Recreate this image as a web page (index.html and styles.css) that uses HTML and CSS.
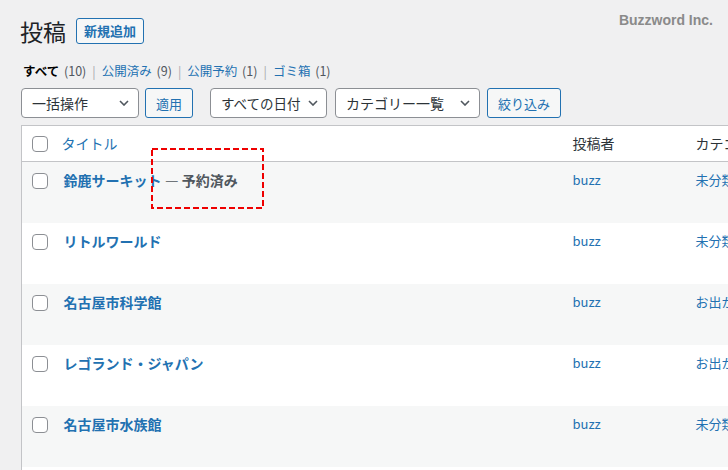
FILE: index.html
```html
<!DOCTYPE html>
<html lang="ja">
<head>
    <meta charset="UTF-8">
    <meta name="viewport" content="width=device-width, initial-scale=1.0">
    <title>投稿一覧</title>
    <link rel="stylesheet" href="styles.css">
</head>
<body>
    <div class="brand">Buzzword Inc.</div>
    <div class="wrap">
        <div class="page-head">
            <h1>投稿</h1>
            <a class="add-new" href="#">新規追加</a>
        </div>

        <ul class="subsubsub">
            <li><a class="current" href="#">すべて <span class="count">(10)</span></a><span class="sep">|</span></li>
            <li><a href="#">公開済み <span class="count">(9)</span></a><span class="sep">|</span></li>
            <li><a href="#">公開予約 <span class="count">(1)</span></a><span class="sep">|</span></li>
            <li><a href="#">ゴミ箱 <span class="count">(1)</span></a></li>
        </ul>

        <div class="tablenav">
            <div class="select bulk">
                <span>一括操作</span>
                <svg width="10" height="6" viewBox="0 0 10 6"><path d="M1 1l4 4 4-4" fill="none" stroke="#50575e" stroke-width="1.6"/></svg>
            </div>
            <button class="btn apply">適用</button>
            <div class="select dates">
                <span>すべての日付</span>
                <svg width="10" height="6" viewBox="0 0 10 6"><path d="M1 1l4 4 4-4" fill="none" stroke="#50575e" stroke-width="1.6"/></svg>
            </div>
            <div class="select cats">
                <span>カテゴリー一覧</span>
                <svg width="10" height="6" viewBox="0 0 10 6"><path d="M1 1l4 4 4-4" fill="none" stroke="#50575e" stroke-width="1.6"/></svg>
            </div>
            <button class="btn filter">絞り込み</button>
        </div>

        <div class="table-holder">
            <table class="posts">
                <colgroup>
                    <col class="c-cb">
                    <col class="c-title">
                    <col class="c-author">
                    <col class="c-cat">
                    <col class="c-tag">
                    <col class="c-date">
                </colgroup>
                <thead>
                    <tr>
                        <th class="check"><input type="checkbox"></th>
                        <th><a href="#">タイトル</a></th>
                        <th>投稿者</th>
                        <th>カテゴリー</th>
                        <th>タグ</th>
                        <th>日付</th>
                    </tr>
                </thead>
                <tbody>
                    <tr>
                        <td class="check"><input type="checkbox"></td>
                        <td class="title"><a href="#">鈴鹿サーキット</a> <span class="state">— 予約済み</span></td>
                        <td><a href="#">buzz</a></td>
                        <td><a href="#">未分類</a></td>
                        <td>—</td>
                        <td>予約済み</td>
                    </tr>
                    <tr>
                        <td class="check"><input type="checkbox"></td>
                        <td class="title"><a href="#">リトルワールド</a></td>
                        <td><a href="#">buzz</a></td>
                        <td><a href="#">未分類</a></td>
                        <td>—</td>
                        <td>公開済み</td>
                    </tr>
                    <tr>
                        <td class="check"><input type="checkbox"></td>
                        <td class="title"><a href="#">名古屋市科学館</a></td>
                        <td><a href="#">buzz</a></td>
                        <td><a href="#">お出かけ</a></td>
                        <td>—</td>
                        <td>公開済み</td>
                    </tr>
                    <tr>
                        <td class="check"><input type="checkbox"></td>
                        <td class="title"><a href="#">レゴランド・ジャパン</a></td>
                        <td><a href="#">buzz</a></td>
                        <td><a href="#">お出かけ</a></td>
                        <td>—</td>
                        <td>公開済み</td>
                    </tr>
                    <tr>
                        <td class="check"><input type="checkbox"></td>
                        <td class="title"><a href="#">名古屋市水族館</a></td>
                        <td><a href="#">buzz</a></td>
                        <td><a href="#">未分類</a></td>
                        <td>—</td>
                        <td>公開済み</td>
                    </tr>
                    <tr>
                        <td class="check"><input type="checkbox"></td>
                        <td class="title"><a href="#">東山動植物園</a></td>
                        <td><a href="#">buzz</a></td>
                        <td><a href="#">未分類</a></td>
                        <td>—</td>
                        <td>公開済み</td>
                    </tr>
                </tbody>
            </table>
            <svg class="mark" width="113" height="61" viewBox="0 0 113 61">
                <rect x="1" y="1" width="111" height="59" fill="none" stroke="#ee0000" stroke-width="2" stroke-dasharray="6 3"/>
            </svg>
        </div>
    </div>
</body>
</html>
```

FILE: styles.css
```css
html, body {
    overflow: hidden;
}

body {
    margin: 0;
    background-color: #f0f0f1;
    color: #3c434a;
    font-family: "Noto Sans CJK JP", "Noto Sans", sans-serif;
    font-size: 13px;
    line-height: 20px;
}

a {
    color: #2271b1;
    text-decoration: none;
}

.brand {
    position: absolute;
    top: 10px;
    right: 15px;
    font-family: "Liberation Sans", sans-serif;
    font-size: 14px;
    font-weight: bold;
    color: #8a8a8a;
}

.wrap {
    padding: 16px 0 0 21px;
}

.page-head {
    display: flex;
    align-items: center;
    gap: 10px;
    height: 30px;
}

.page-head h1 {
    margin: 0 0 0 -1px;
    font-size: 23px;
    font-weight: 400;
    line-height: 30px;
    color: #1d2327;
}

.add-new {
    display: inline-block;
    height: 24px;
    padding: 0 7px;
    border: 1px solid #2271b1;
    border-radius: 3px;
    background-color: #f6f7f7;
    font-size: 13px;
    font-weight: bold;
    line-height: 24px;
}

.subsubsub {
    list-style: none;
    margin: 15px 0 0 2px;
    padding: 0;
    display: flex;
    font-size: 12.5px;
}

.subsubsub .current {
    color: #000;
    font-weight: bold;
}

.subsubsub .count {
    color: #50575e;
    font-weight: 400;
    margin-left: 2px;
}

.subsubsub .sep {
    color: #a7aaad;
    padding: 0 6px;
}

.tablenav {
    display: flex;
    align-items: center;
    margin-top: 7px;
    height: 30px;
}

.select {
    box-sizing: border-box;
    height: 30px;
    display: flex;
    align-items: center;
    justify-content: space-between;
    background-color: #fff;
    border: 1px solid #8c8f94;
    border-radius: 4px;
    padding: 0 9px 0 10px;
    font-size: 14px;
    color: #2c3338;
}

.select.bulk {
    width: 118px;
}

.select.dates {
    width: 117px;
    margin-left: 17px;
    padding: 0 8px 0 10px;
    font-size: 13.5px;
}

.select.cats {
    width: 145px;
    margin-left: 8px;
}

.btn {
    box-sizing: border-box;
    height: 30px;
    padding: 0 9px;
    border: 1px solid #2271b1;
    border-radius: 3px;
    background-color: #f6f7f7;
    color: #2271b1;
    font-family: inherit;
    font-size: 13px;
}

.btn.apply {
    width: 48px;
    margin-left: 6px;
}

.btn.filter {
    width: 74px;
    margin-left: 7px;
}

.table-holder {
    position: relative;
    margin-top: 7px;
}

.posts {
    width: 1000px;
    table-layout: fixed;
    border-collapse: collapse;
    border: 1px solid #c3c4c7;
    background-color: #fff;
}

.c-cb { width: 30px; }
.c-title { width: 511px; }
.c-author { width: 123px; }
.c-cat { width: 150px; }
.c-tag { width: 90px; }

.posts th {
    text-align: left;
    vertical-align: top;
    font-weight: 400;
    font-size: 14px;
    color: #2c3338;
    padding: 8px 10px;
    line-height: 19px;
    border-bottom: 1px solid #c3c4c7;
}

.posts td {
    vertical-align: top;
    padding: 8px 10px;
    height: 45px;
    font-size: 13px;
}

.posts tbody tr:nth-child(odd) {
    background-color: #f6f7f7;
}

.posts th.check {
    padding: 10px 0 0 10px;
}

.posts td.check {
    padding: 11px 0 0 10px;
}

.posts input[type="checkbox"] {
    appearance: none;
    display: block;
    margin: 0;
    width: 16px;
    height: 16px;
    border: 1px solid #8c8f94;
    border-radius: 4px;
    background-color: #fff;
}

.posts td.title {
    padding-left: 12px;
    font-size: 14px;
    font-weight: bold;
}

.posts .state {
    color: #50575e;
}

.mark {
    position: absolute;
    left: 130px;
    top: 23px;
}
```
